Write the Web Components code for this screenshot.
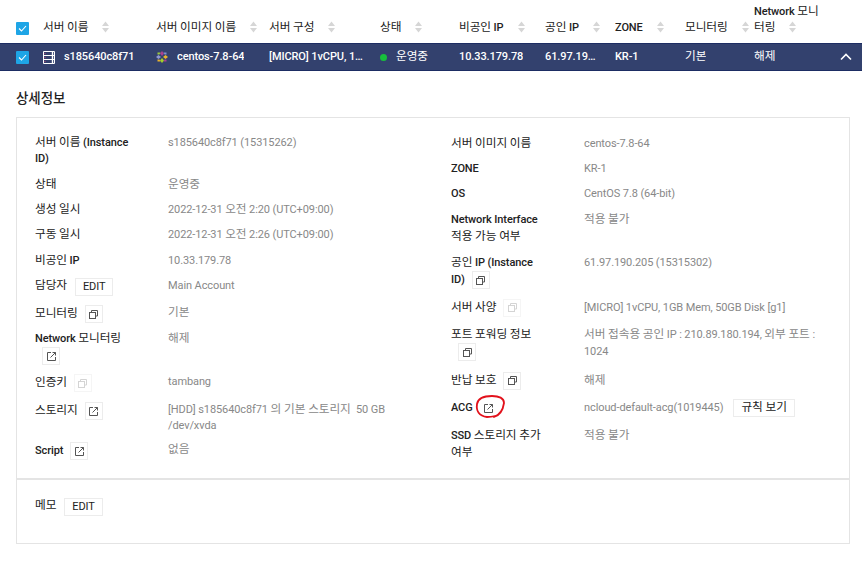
<!DOCTYPE html>
<html lang="ko">
<head>
<meta charset="utf-8">
<title>서버 상세정보</title>
<style>
  html, body { margin: 0; background: #fff; }
  body { font: 11px/16px Roboto, "Noto Sans CJK KR", sans-serif; letter-spacing: -0.1px; color: #222; overflow: hidden; }
  /* hangul runs are a bit larger and lighter than the latin text around them */
  .ko { font-size: 11.7px; font-weight: 400; line-height: 0; }
  [slot="title"] .ko { font-size: 13.5px; font-weight: 500; }
</style>
</head>
<body>
<server-page>
  <server-head>
    <check-box slot="check"></check-box>
    <head-cell>서버 이름</head-cell>
    <head-cell>서버 이미지 이름</head-cell>
    <head-cell>서버 구성</head-cell>
    <head-cell>상태</head-cell>
    <head-cell>비공인 IP</head-cell>
    <head-cell>공인 IP</head-cell>
    <head-cell>ZONE</head-cell>
    <head-cell>모니터링</head-cell>
    <head-cell style="max-width: 72px">Network 모니터링</head-cell>
  </server-head>
  <server-row>
    <check-box slot="check"></check-box>
    <row-cell icon="server">s185640c8f71</row-cell>
    <row-cell icon="centos">centos-7.8-64</row-cell>
    <row-cell cut="95">[MICRO] 1vCPU, 1GB Mem, 50GB Disk [g1]</row-cell>
    <row-cell icon="dot" plain>운영중</row-cell>
    <row-cell>10.33.179.78</row-cell>
    <row-cell cut="52">61.97.190.205</row-cell>
    <row-cell>KR-1</row-cell>
    <row-cell plain>기본</row-cell>
    <row-cell>해제</row-cell>
  </server-row>

  <detail-panel>
    <span slot="title">상세정보</span>
    <info-col slot="left">
      <info-item><span slot="label">서버 이름 (Instance ID)</span>s185640c8f71 (15315262)</info-item>
      <info-item style="margin-top: 1px"><span slot="label">상태</span>운영중</info-item>
      <info-item><span slot="label">생성 일시</span>2022-12-31 오전 2:20 (UTC+09:00)</info-item>
      <info-item><span slot="label">구동 일시</span>2022-12-31 오전 2:26 (UTC+09:00)</info-item>
      <info-item style="margin-top: 1px"><span slot="label">비공인 IP</span>10.33.179.78</info-item>
      <info-item><span slot="label">담당자<text-btn>EDIT</text-btn></span>Main Account</info-item>
      <info-item><span slot="label">모니터링<icon-btn kind="copy"></icon-btn></span>기본</info-item>
      <info-item style="margin-top: -1px"><span slot="label">Network 모니터링<icon-btn kind="link"></icon-btn></span>해제</info-item>
      <info-item><span slot="label">인증키<icon-btn kind="copy" off></icon-btn></span>tambang</info-item>
      <info-item style="margin-top: 1px"><span slot="label">스토리지<icon-btn kind="link"></icon-btn></span>[HDD] s185640c8f71 의 기본 스토리지 &nbsp;50 GB<br>/dev/xvda</info-item>
      <info-item style="margin-top: -1px"><span slot="label">Script<icon-btn kind="link"></icon-btn></span>없음</info-item>
    </info-col>
    <info-col slot="right" tall>
      <info-item><span slot="label">서버 이미지 이름</span>centos-7.8-64</info-item>
      <info-item style="margin-top: -1px"><span slot="label">ZONE</span>KR-1</info-item>
      <info-item><span slot="label">OS</span>CentOS 7.8 (64-bit)</info-item>
      <info-item><span slot="label">Network Interface 적용 가능 여부</span>적용 불가</info-item>
      <info-item style="margin-top: 1px"><span slot="label">공인 IP (Instance ID)<icon-btn kind="copy"></icon-btn></span>61.97.190.205 (15315302)</info-item>
      <info-item style="margin-top: 1px"><span slot="label">서버 사양<icon-btn kind="copy" off></icon-btn></span>[MICRO] 1vCPU, 1GB Mem, 50GB Disk [g1]</info-item>
      <info-item style="margin-top: 1px"><span slot="label">포트 포워딩 정보<icon-btn kind="copy"></icon-btn></span>서버 접속용 공인 IP : 210.89.180.194, 외부 포트 : 1024</info-item>
      <info-item style="margin-top: 2px"><span slot="label">반납 보호<icon-btn kind="copy"></icon-btn></span>해제</info-item>
      <info-item style="margin-top: 1px"><span slot="label">ACG<icon-btn kind="link" bare circled></icon-btn></span>ncloud-default-acg(1019445)<text-btn wide>규칙 보기</text-btn></info-item>
      <info-item style="margin-top: 1px"><span slot="label">SSD 스토리지 추가 여부</span>적용 불가</info-item>
    </info-col>
    <info-item slot="memo"><span slot="label">메모<text-btn>EDIT</text-btn></span></info-item>
  </detail-panel>
</server-page>

<script>
const COLUMNS = '27px 113px 113px 111px 79px 86px 70px 70px 69px';

// wrap hangul runs of the light dom so the page style can size them
function markHangul(root) {
  const walker = document.createTreeWalker(root, NodeFilter.SHOW_TEXT);
  const nodes = [];
  while (walker.nextNode()) {
    if (walker.currentNode.parentNode.tagName !== 'SCRIPT') nodes.push(walker.currentNode);
  }
  nodes.forEach(node => {
    const parts = node.nodeValue.split(/([\uAC00-\uD7A3]+(?: [\uAC00-\uD7A3]+)*)/);
    if (parts.length < 2) return;
    const frag = document.createDocumentFragment();
    parts.forEach((part, i) => {
      if (i % 2) {
        const span = document.createElement('span');
        span.className = 'ko';
        span.textContent = part;
        frag.appendChild(span);
      } else if (part) {
        frag.appendChild(document.createTextNode(part));
      }
    });
    node.parentNode.replaceChild(frag, node);
  });
}

class ServerPage extends HTMLElement {
  constructor() {
    super();
    this.attachShadow({ mode: 'open' });
    this.shadowRoot.innerHTML = `
      <style>:host { display: block; }</style>
      <slot></slot>
    `;
  }
}

class ServerHead extends HTMLElement {
  constructor() {
    super();
    this.attachShadow({ mode: 'open' });
    this.shadowRoot.innerHTML = `
      <style>
        :host {
          display: grid;
          grid-template-columns: ${COLUMNS} 1fr;
          align-items: end;
          height: 36px;
          padding: 0 0 7px 16px;
        }
        .check { display: flex; padding-bottom: 1px; }
      </style>
      <div class="check"><slot name="check"></slot></div>
      <slot></slot>
    `;
  }
}

class HeadCell extends HTMLElement {
  constructor() {
    super();
    this.attachShadow({ mode: 'open' });
    this.shadowRoot.innerHTML = `
      <style>
        :host { display: block; font-weight: 500; color: #222; }
        svg { margin-left: 14px; vertical-align: -2px; }
      </style>
      <slot></slot><svg width="7" height="12" viewBox="0 0 7 12"><path d="M3.500 0.500 7 5H0zM0 7h7l-3.500 4.500z" fill="#d6d6d6"/></svg>
    `;
  }
}

class ServerRow extends HTMLElement {
  constructor() {
    super();
    this.attachShadow({ mode: 'open' });
    this.shadowRoot.innerHTML = `
      <style>
        :host {
          display: grid;
          grid-template-columns: ${COLUMNS} 1fr auto;
          align-items: center;
          height: 26px;
          padding: 0 10px 0 16px;
          background: #33416e;
          border-top: 1px solid #1d2d63;
          border-bottom: 1px solid #1d2d63;
          color: #fff;
        }
        .check { display: flex; }
      </style>
      <div class="check"><slot name="check"></slot></div>
      <slot></slot>
      <svg width="12" height="8" viewBox="0 0 12 8"><path d="M1 6.500 6 1.500l5 5" fill="none" stroke="#fff" stroke-width="1.600"/></svg>
    `;
  }
}

const ROW_ICONS = {
  server: `<svg width="12" height="13" viewBox="0 0 12 13"><path d="M0.500 0.500h11v12H0.500z" fill="#33416e" stroke="#fff"/><path d="M1 4.500h10M1 8.500h10" stroke="#fff"/><path d="M9.500 1v11" stroke="#fff" stroke-width="1.400"/><path d="M1.500 2.500h1M1.500 6.500h1M1.500 10.500h1" stroke="#c8447a"/></svg>`,
  centos: `<svg width="12" height="12" viewBox="0 0 12 12"><path d="M6 0 8 2.500 6 5 4 2.500z" fill="#a8418f"/><path d="M12 6 9.500 8 7 6 9.500 4z" fill="#eab32c"/><path d="M6 12 4 9.500 6 7l2 2.500z" fill="#a2d02a"/><path d="M0 6 2.500 4 5 6 2.500 8z" fill="#8f97d2"/><path d="M1.500 1.500h3l-1 2h-2z" fill="#9dc93c"/><path d="M7.500 1.500h3v2h-2z" fill="#7d8fd0"/><path d="M7.500 10.500h3v-2h-2z" fill="#a8418f"/><path d="M1.500 10.500h3l-1-2h-2z" fill="#eab32c"/></svg>`,
  dot: `<svg width="7" height="7" viewBox="0 0 7 7"><circle cx="3.500" cy="3.500" r="3.500" fill="#17c03c"/></svg>`
};
const ROW_GAPS = { server: 9, centos: 9, dot: 9 };

class RowCell extends HTMLElement {
  constructor() {
    super();
    this.attachShadow({ mode: 'open' });
  }

  connectedCallback() {
    const icon = this.getAttribute('icon');
    const cut = this.getAttribute('cut');
    const gap = ROW_GAPS[icon] || 0;
    this.shadowRoot.innerHTML = `
      <style>
        :host { display: flex; align-items: center; min-width: 0; font-weight: ${this.hasAttribute('plain') ? 400 : 500}; }
        .icon { display: flex; margin-right: ${gap}px; }
        .text { white-space: nowrap; overflow: hidden; text-overflow: ellipsis; ${cut ? `width: ${cut}px;` : ''} }
      </style>
      ${icon ? `<span class="icon">${ROW_ICONS[icon]}</span>` : ''}
      <span class="text"><slot></slot></span>
    `;
  }
}

class CheckBox extends HTMLElement {
  constructor() {
    super();
    this.attachShadow({ mode: 'open' });
    this.shadowRoot.innerHTML = `
      <style>
        :host { display: block; width: 13px; height: 13px; background: #1ea5e6; border-radius: 1px; }
        svg { display: block; }
      </style>
      <svg width="13" height="13" viewBox="0 0 13 13"><path d="M3 6.500 5.500 9 10 4" fill="none" stroke="#fff" stroke-width="1.100"/></svg>
    `;
  }
}

class DetailPanel extends HTMLElement {
  constructor() {
    super();
    this.attachShadow({ mode: 'open' });
    this.shadowRoot.innerHTML = `
      <style>
        :host { display: block; padding: 17px 12px 0 16px; }
        h2 { margin: 0 0 9px; font-size: 14px; line-height: 20px; font-weight: 500; color: #222; }
        .card { border: 1px solid #e4e4e4; }
        .cols { display: grid; grid-template-columns: 416px 1fr; height: 343px; padding: 17px 18px 0; border-bottom: 2px solid #e4e4e4; }
        .memo { height: 63px; box-sizing: border-box; padding: 18px 18px 0; }
      </style>
      <h2><slot name="title"></slot></h2>
      <div class="card">
        <div class="cols">
          <slot name="left"></slot>
          <slot name="right"></slot>
        </div>
        <div class="memo"><slot name="memo"></slot></div>
      </div>
    `;
  }
}

class InfoCol extends HTMLElement {
  constructor() {
    super();
    this.attachShadow({ mode: 'open' });
    this.shadowRoot.innerHTML = `
      <style>
        :host { display: flex; flex-direction: column; gap: 9px; }
        :host([tall]) { line-height: 17px; gap: 8.5px; }
      </style>
      <slot></slot>
    `;
  }
}

class InfoItem extends HTMLElement {
  constructor() {
    super();
    this.attachShadow({ mode: 'open' });
    this.shadowRoot.innerHTML = `
      <style>
        :host { display: grid; grid-template-columns: 133px 248px; }
        .label { width: 98px; font-weight: 500; color: #222; }
        .value { color: #888; }
      </style>
      <div class="label"><slot name="label"></slot></div>
      <div class="value"><slot></slot></div>
    `;
  }
}

class TextBtn extends HTMLElement {
  constructor() {
    super();
    this.attachShadow({ mode: 'open' });
    this.shadowRoot.innerHTML = `
      <style>
        :host {
          display: inline-block;
          box-sizing: border-box;
          height: 18px;
          line-height: 16px;
          padding: 0 7px;
          margin-left: 8px;
          border: 1px solid #ececec;
          font-weight: 400;
          color: #222;
          vertical-align: top;
        }
        :host([wide]) { margin-left: 10px; }
      </style>
      <slot></slot>
    `;
  }
}

const BTN_ICONS = {
  copy: `<path d="M2.500 2.500V0.500h6v5.500H6.500" fill="none" stroke="currentColor"/><rect x="0.500" y="2.500" width="6" height="6" fill="none" stroke="currentColor"/>`,
  link: `<path d="M4 0.500H0.500v8h8V5" fill="none" stroke="currentColor"/><path d="M3.500 5.500 8.500 0.500M5.500 0.500h3v3" fill="none" stroke="currentColor"/>`
};

class IconBtn extends HTMLElement {
  constructor() {
    super();
    this.attachShadow({ mode: 'open' });
  }

  connectedCallback() {
    const off = this.hasAttribute('off');
    const bare = this.hasAttribute('bare');
    const circled = this.hasAttribute('circled');
    this.shadowRoot.innerHTML = `
      <style>
        :host {
          display: inline-flex;
          position: relative;
          align-items: center;
          justify-content: center;
          box-sizing: border-box;
          width: 18px;
          height: 18px;
          margin-left: 7px;
          border: 1px solid ${bare ? 'transparent' : off ? '#f5f5f5' : '#ececec'};
          color: ${off ? '#d4d4d4' : '#555'};
          vertical-align: middle;
        }
        .mark { position: absolute; left: -8px; top: -7px; }
      </style>
      <svg width="9" height="9" viewBox="0 0 9 9">${BTN_ICONS[this.getAttribute('kind')]}</svg>
      ${circled ? `<svg class="mark" width="34" height="31" viewBox="0 0 34 31"><path d="M21 24C27 22 30 17 31 10 31 5 26 3 19 3 11 3 5 5 4 11 3 18 6 23 14 24 18 24 20 23.500 22 23" fill="none" stroke="#e2111b" stroke-width="1.800" stroke-linecap="round"/></svg>` : ''}
    `;
  }
}

markHangul(document.querySelector('server-page'));

customElements.define('server-page', ServerPage);
customElements.define('server-head', ServerHead);
customElements.define('head-cell', HeadCell);
customElements.define('server-row', ServerRow);
customElements.define('row-cell', RowCell);
customElements.define('check-box', CheckBox);
customElements.define('detail-panel', DetailPanel);
customElements.define('info-col', InfoCol);
customElements.define('info-item', InfoItem);
customElements.define('text-btn', TextBtn);
customElements.define('icon-btn', IconBtn);
</script>
</body>
</html>
